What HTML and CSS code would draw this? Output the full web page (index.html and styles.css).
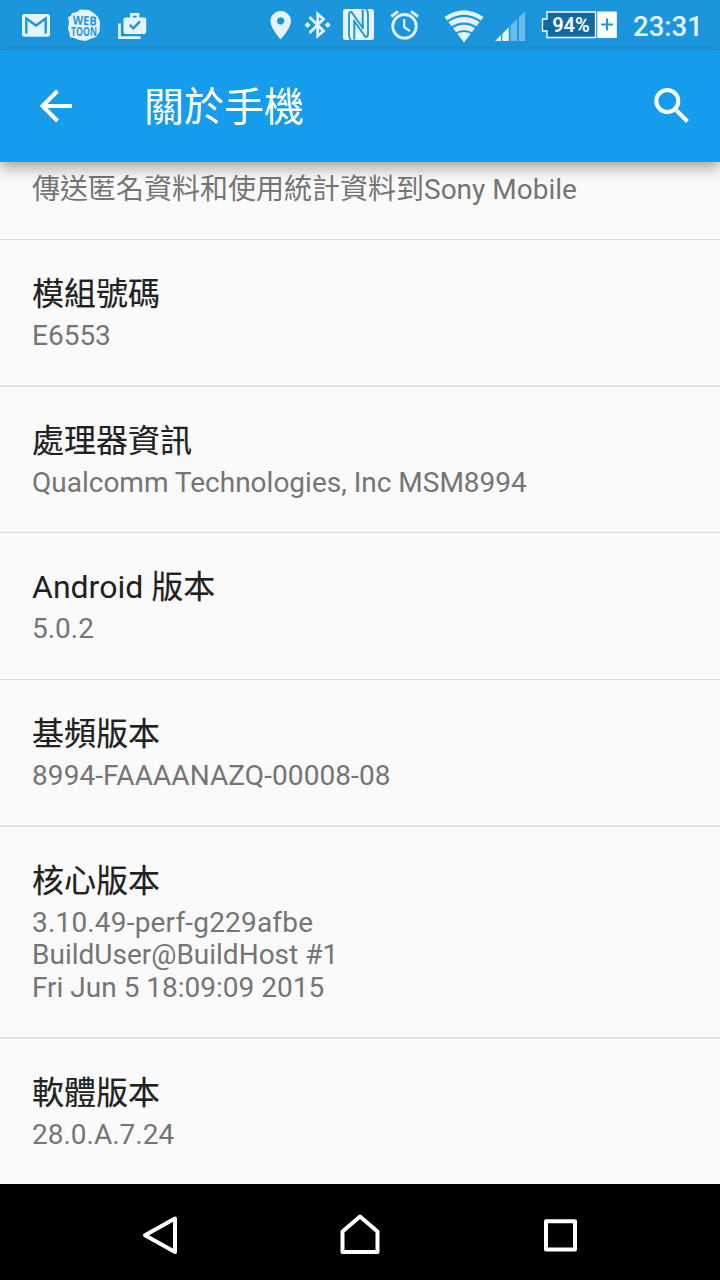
FILE: index.html
```html
<!DOCTYPE html>
<html lang="zh-Hant">
<head>
	<meta charset="UTF-8">
	<title>關於手機</title>
	<link rel="stylesheet" href="styles.css">
</head>
<body>
	<div class="phone">
		<div class="status">
			<div class="status-left">
				<svg class="icon" width="44" height="50" viewBox="16 0 44 50">
					<rect x="22" y="14" width="28" height="22.7" rx="2.5"/>
					<path class="cut" d="M26.3 33.5V18.5L36 25.5L45.7 18.5V33.5" stroke-width="2.4"/>
				</svg>
				<svg class="icon" width="48" height="50" viewBox="60 0 48 50">
					<path d="M72 13L77 12L80 9.5L89 10L94 13L98 17L100 22L99.500 32L96 37L90 39L86 41L79 40L74 38L70 37L69.500 33L68 29L69 22L68 17L71 16Z"/>
					<text class="toon" x="72.500" y="25" textLength="24" lengthAdjust="spacingAndGlyphs" transform="rotate(2 84 25)">WEB</text>
					<text class="toon" x="71" y="36" textLength="26" lengthAdjust="spacingAndGlyphs">TOON</text>
				</svg>
				<svg class="icon" width="48" height="50" viewBox="108 0 48 50">
					<rect x="123.500" y="17.500" width="22.700" height="16.500" rx="2"/>
					<path class="line" d="M131.500 18V14.300H138V18M119.500 23.500V37.700H140.500" stroke-width="2.700"/>
					<path class="cut" d="M129.800 24.800L133.300 28.300L140 21.300" stroke-width="2.400"/>
				</svg>
			</div>
			<div class="status-right">
				<svg class="icon" width="34" height="50" viewBox="264 0 34 50">
					<path fill-rule="evenodd" d="M280.700 11C275 11 270.500 15.500 270.500 21C270.500 28.500 280.700 39.300 280.700 39.300S291 28.500 291 21C291 15.500 286.400 11 280.700 11ZM280.700 17.200A3.700 3.700 0 1 1 280.600 17.200Z"/>
				</svg>
				<svg class="icon" width="40" height="50" viewBox="298 0 40 50">
					<path class="line" d="M309.500 17L323.500 31L317.700 36V14L323.500 19L309.500 33" stroke-width="2.800"/>
					<path d="M307.500 22L310.500 25L307.500 28L304.500 25ZM327.800 22L330.800 25L327.800 28L324.800 25Z"/>
				</svg>
				<svg class="icon" width="42" height="50" viewBox="338 0 42 50">
					<rect x="343" y="9" width="31" height="31" rx="2.500"/>
					<path class="cut" d="M363.500 29L351.500 12Q349 12 349 15V35Q349 38 351 40.500M353.500 20L365.500 37Q368 37 368 34V14Q368 11 366 8.500" stroke-width="1.800"/>
					<path class="cut" d="M354.300 39.500V21M362.700 9.500V28" stroke-width="2"/>
				</svg>
				<svg class="icon" width="52" height="50" viewBox="380 0 52 50">
					<circle class="line" cx="404.500" cy="26.300" r="11.800" stroke-width="2.800"/>
					<path class="line" d="M391.300 16.500L398 11.300M411 11.300L418 16.500" stroke-width="2.900"/>
					<path class="line" d="M404.200 19V27.200L410 31" stroke-width="2.200"/>
				</svg>
				<svg class="icon" width="56" height="50" viewBox="432 0 56 50">
					<path d="M464 42.500L444.500 17Q464 3.500 483.500 17Z"/>
					<path class="cut" d="M446 22.300Q464 9.500 482 22.300M450 28.700Q464 18.500 478 28.700M454 34.500Q464 27.500 474 34.500" stroke-width="2.100"/>
				</svg>
				<svg class="icon" width="46" height="50" viewBox="488 0 46 50">
					<path d="M495 41L501 35V41ZM502.300 33.700L508.800 27.200V41H502.300Z"/>
					<path opacity=".4" d="M510.500 25.500L517 19V41H510.500ZM518.800 17.200L525 11V41H518.800Z"/>
				</svg>
				<svg class="icon" width="88" height="50" viewBox="534 0 88 50">
					<path class="battery" d="M547 12H595.500V37.500H547V31H542.500V19H547Z"/>
					<rect class="white" x="597.300" y="11.500" width="19.500" height="26.500"/>
					<path class="cut" d="M607 18.500V30.500M601 24.500H613" stroke-width="2"/>
					<text class="percent" x="571" y="32">94%</text>
				</svg>
				<span class="clock">23:31</span>
			</div>
		</div>

		<div class="appbar">
			<svg class="back" width="34" height="34" viewBox="0 0 34 34">
				<path d="M18.500 2L3.500 17L18.500 32M3.500 17H33"/>
			</svg>
			<h1 class="appbar-title">關於手機</h1>
			<svg class="search" width="36" height="36" viewBox="0 0 36 36">
				<circle cx="13.300" cy="13" r="11"/>
				<path d="M22.500 22.500L33.500 33.500"/>
			</svg>
		</div>

		<div class="list">
			<div class="item item-cut">
				<p class="value">傳送匿名資料和使用統計資料到Sony Mobile</p>
			</div>
			<div class="item thick">
				<h2 class="name"><span class="han">模組號碼</span></h2>
				<p class="value">E6553</p>
			</div>
			<div class="item">
				<h2 class="name"><span class="han">處理器資訊</span></h2>
				<p class="value">Qualcomm Technologies, Inc MSM8994</p>
			</div>
			<div class="item">
				<h2 class="name">Android <span class="han">版本</span></h2>
				<p class="value">5.0.2</p>
			</div>
			<div class="item thick">
				<h2 class="name"><span class="han">基頻版本</span></h2>
				<p class="value"><span class="code">8994-FAAAANAZQ-00008-08</span></p>
			</div>
			<div class="item item-tall thick">
				<h2 class="name"><span class="han">核心版本</span></h2>
				<p class="value"><span class="kernel">3.10.49-perf-g229afbe</span><br>BuildUser@BuildHost #1<br>Fri Jun 5 18:09:09 2015</p>
			</div>
			<div class="item">
				<h2 class="name"><span class="han">軟體版本</span></h2>
				<p class="value">28.0.A.7.24</p>
			</div>
		</div>

		<div class="navbar">
			<svg width="200" height="96" viewBox="60 1184 200 96">
				<path d="M145 1235.300L175 1218.500V1252Z"/>
			</svg>
			<svg width="200" height="96" viewBox="260 1184 200 96">
				<path d="M342.500 1252V1231.500L360 1216.500L377.500 1231.500V1252Z"/>
			</svg>
			<svg width="200" height="96" viewBox="460 1184 200 96">
				<path d="M546 1221.300H575V1249.500H546Z"/>
			</svg>
		</div>
	</div>
</body>
</html>
```
FILE: styles.css
```css
*{
	margin:0;
	padding:0;
	box-sizing:border-box;
}

body{
	font-family:Roboto,"Noto Sans CJK TC",sans-serif;
	background:#fafafa;
}

.phone{
	display:flex;
	flex-direction:column;
	width:720px;
	height:1280px;
	overflow:hidden;
}

/* status bar */
.status{
	display:flex;
	justify-content:space-between;
	flex:none;
	height:50px;
	padding-left:16px;
	background:#1b96dc;
}

.status-left,.status-right{
	display:flex;
}

.icon{
	display:block;
	fill:#e6f3fc;
}

.icon .line{
	fill:none;
	stroke:#e6f3fc;
}

.icon .cut{
	fill:none;
	stroke:#1b96dc;
}

.icon .white{
	fill:#fff;
}

.icon .battery{
	fill:#11699f;
	stroke:#fff;
	stroke-width:1.3;
}

.percent{
	fill:#fff;
	font-size:20px;
	font-weight:600;
	text-anchor:middle;
}

.toon{
	fill:#1b96dc;
	font-family:"Open Sans",sans-serif;
	font-size:12.5px;
	font-weight:700;
}

.clock{
	width:98px;
	padding-left:11px;
	font-size:27.5px;
	line-height:53px;
	font-weight:500;
	color:#e6f3fc;
}

/* title bar */
.appbar{
	position:relative;
	display:flex;
	align-items:center;
	flex:none;
	height:112px;
	padding:0 30px 0 39px;
	background:#169cec;
	box-shadow:0 6px 14px rgba(0,0,0,.35);
}

.appbar svg{
	fill:none;
	stroke:#fff;
	stroke-width:4;
}

.appbar-title{
	flex:1;
	padding:4px 0 0 71px;
	font-size:40px;
	font-weight:400;
	line-height:56px;
	color:#fff;
}

/* settings list */
.list{
	flex:1;
	overflow:hidden;
}

.item{
	height:146.67px;
	padding:32px 32px 0;
	border-bottom:1px solid #dcdcdc;
}

.thick{
	border-bottom:2px solid #e4e4e4;
}

.item-tall{
	height:212px;
}

.item:last-child{
	border-bottom:0;
}

.item-cut{
	height:78px;
	padding-top:12px;
}

.name{
	padding-bottom:4px;
	font-size:32px;
	font-weight:400;
	line-height:44px;
	color:#212121;
}

.han{
	-webkit-text-stroke:.2px #212121;
}

.value{
	font-size:28px;
	line-height:32.8px;
	color:#757575;
}

.code{
	letter-spacing:.08px;
}

.kernel{
	letter-spacing:.18px;
}

/* navigation keys */
.navbar{
	display:flex;
	justify-content:center;
	flex:none;
	height:96px;
	background:#000;
}

.navbar svg{
	fill:none;
	stroke:#fff;
	stroke-width:4;
	stroke-linejoin:round;
}
```
